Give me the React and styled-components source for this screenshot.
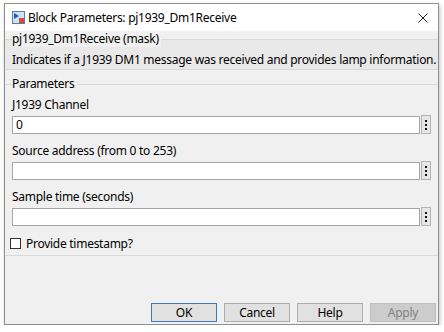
import React from 'react'
import styled, { createGlobalStyle } from 'styled-components'

const Global = createGlobalStyle`
  body {
    margin: 0;
    background: #fff;
    font-family: "Noto Sans", "DejaVu Sans", sans-serif;
    font-size: 12px;
    letter-spacing: -0.27px;
    color: #000;
  }
`

const Page = styled.div`
  padding: 3px 0 0 4px;
`

const Window = styled.div`
  width: 435px;
  height: 322px;
  box-sizing: border-box;
  border: 1px solid #8f8f8f;
  background: #f0f0f0;
  box-shadow: 1px 2px 4px rgba(0,0,0,0.25);
  display: flex;
  flex-direction: column;
`

const TitleBar = styled.div`
  height: 27px;
  background: #fff;
  display: flex;
  align-items: center;
  padding: 0 10px 0 7px;
  gap: 3px;
`

const TitleText = styled.div`
  flex: 1;
  font-size: 12px;
  line-height: 16px;
`

const Group = styled.fieldset`
  margin: ${p => p.$top || 0}px 0 0;
  padding: 0 7px;
  border: 1px solid #d9d9d9;
  border-left: none;
  border-right: none;
  background: ${p => p.$bg || 'transparent'};
  min-width: 0;
`

const Legend = styled.legend`
  padding: 0 2px 0 0;
  margin: 0;
  line-height: 16px;
  background: #f0f0f0;
`

const Description = styled.div`
  line-height: 16px;
  padding: 5px 0 1px;
  white-space: nowrap;
`

const Params = styled.div`
  padding-top: 4px;
  padding-bottom: 3px;
  display: flex;
  flex-direction: column;
`

const Label = styled.div`
  line-height: 18px;
  margin-bottom: 1px;
`

const FieldRow = styled.div`
  display: flex;
  align-items: center;
  gap: 1px;
  margin-bottom: 8px;
`

const Input = styled.div`
  flex: 1;
  height: 18px;
  box-sizing: border-box;
  border: 1px solid #a5a5a5;
  background: #fff;
  line-height: 16px;
  padding-left: 3px;
`

const DotsButton = styled.div`
  width: 10px;
  height: 19px;
  box-sizing: border-box;
  border: 1px solid #b4b4b4;
  background: #e6e6e6;
  display: flex;
  flex-direction: column;
  align-items: center;
  justify-content: center;
  gap: 2px;
  span {
    width: 2px;
    height: 2px;
    background: #111;
  }
`

const CheckRow = styled.label`
  display: flex;
  align-items: center;
  gap: 5px;
  height: 18px;
  margin-left: -2px;
`

const Box = styled.span`
  width: 11px;
  height: 11px;
  box-sizing: border-box;
  border: 1px solid #333;
  background: #fff;
`

const Spacer = styled.div`
  flex: 1;
`

const ButtonBar = styled.div`
  display: flex;
  justify-content: flex-end;
  gap: 7px;
  padding: 0 2px 2px 0;
`

const Button = styled.div`
  width: 66px;
  height: 19px;
  box-sizing: border-box;
  display: flex;
  align-items: center;
  justify-content: center;
  background: ${p => (p.$disabled ? '#cccccc' : '#e1e1e1')};
  border: 1px solid ${p => (p.$primary ? '#3d7ab8' : p.$disabled ? '#bfbfbf' : '#adadad')};
  color: ${p => (p.$disabled ? '#838383' : '#000')};
`

const BlockIcon = () => (
  <svg width="13" height="13" viewBox="0 0 13 13">
    <rect x="0.5" y="0.5" width="12" height="12" fill="#cfe3f5" stroke="#5a7fa6" />
    <path d="M2 2 L7 5 L2 8 Z" fill="#1f5fb0" />
    <rect x="7" y="7" width="5" height="5" fill="#e0453a" />
  </svg>
)

const CloseIcon = () => (
  <svg width="10" height="10" viewBox="0 0 10 10">
    <path d="M0.5 0.5 L9.5 9.5 M9.5 0.5 L0.5 9.5" stroke="#222" strokeWidth="1" />
  </svg>
)

const Field = ({ label, value }) => (
  <>
    <Label>{label}</Label>
    <FieldRow>
      <Input>{value}</Input>
      <DotsButton><span /><span /><span /></DotsButton>
    </FieldRow>
  </>
)

const App = () => {
  return (
    <Page>
      <Global />
      <Window>
        <TitleBar>
          <BlockIcon />
          <TitleText>Block Parameters: pj1939_Dm1Receive</TitleText>
          <CloseIcon />
        </TitleBar>
        <Group $bg="#e9e9e9">
          <Legend>pj1939_Dm1Receive (mask)</Legend>
          <Description>Indicates if a J1939 DM1 message was received and provides lamp information.</Description>
        </Group>
        <Group $top={6}>
          <Legend>Parameters</Legend>
          <Params>
            <Field label="J1939 Channel" value="0" />
            <Field label="Source address (from 0 to 253)" value="" />
            <Field label="Sample time (seconds)" value="" />
            <CheckRow>
              <Box />
              Provide timestamp?
            </CheckRow>
          </Params>
        </Group>
        <Spacer />
        <ButtonBar>
          <Button $primary>OK</Button>
          <Button>Cancel</Button>
          <Button>Help</Button>
          <Button $disabled>Apply</Button>
        </ButtonBar>
      </Window>
    </Page>
  )
}

export default App
